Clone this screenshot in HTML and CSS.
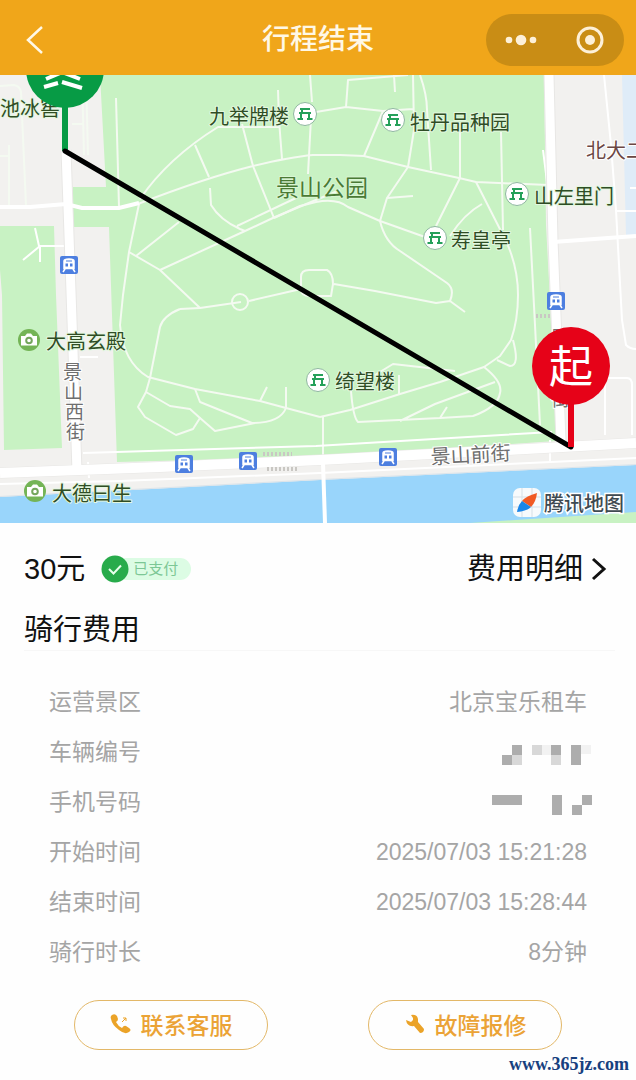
FILE: index.html
```html
<!DOCTYPE html>
<html lang="zh-CN">

<head>
    <meta charset="UTF-8">
    <meta name="viewport" content="width=device-width, initial-scale=1.0">
    <title>行程结束</title>
    <link rel="stylesheet" href="styles.css">
</head>

<body>
    <header class="nav">
        <button class="back" aria-label="返回">
            <svg width="20" height="30" viewBox="0 0 20 30"><path d="M17 2 3 15 17 28" /></svg>
        </button>
        <h1>行程结束</h1>
        <div class="capsule">
            <button aria-label="更多">
                <svg width="32" height="12" viewBox="0 0 32 12">
                    <circle cx="4" cy="6" r="3.3" />
                    <circle cx="16" cy="6" r="5.3" />
                    <circle cx="28" cy="6" r="3.3" />
                </svg>
            </button>
            <button aria-label="关闭">
                <svg width="30" height="30" viewBox="0 0 30 30">
                    <circle class="ring" cx="15" cy="15" r="12" />
                    <circle cx="15" cy="15" r="5" />
                </svg>
            </button>
        </div>
    </header>

    <svg class="map" viewBox="0 75 636 448" role="img" aria-label="骑行轨迹">
        <defs>
            <g id="gate">
                <circle class="gate-bg" r="11.5" />
                <path class="gate-line" d="M-5-5H5M-6-1H6M-4-1V5M4-1V5M-7.500 5H-2M2 5H7.500M-3-5V-1" />
            </g>
            <g id="bus">
                <rect class="bus-bg" x="-9" y="-9" width="18" height="18" rx="2" />
                <path class="bus-body" d="M-5-4Q-5-6 0-6 5-6 5-4V3.500H-5ZM-4 4-6 7M4 4 6 7" />
                <path class="bus-win" d="M-3.500-1.500h2.500v3h-2.500zM1-1.500h2.500v3h-2.500zM-3-4.500h6v1h-6z" />
            </g>
            <g id="camera">
                <circle class="camera-bg" r="11" />
                <path class="camera-body" d="M-8-4H-4L-2-6.500H2L4-4H8V5.500H-8Z" />
                <circle class="camera-lens" r="2.800" cy="0.500" />
            </g>
        </defs>

        <!-- 地块 -->
        <rect class="land" y="75" width="636" height="448" />
        <path class="park" d="M100 75H544L546 225 550 300 556 441 316 457 117 462 109 227H73V187H106Z" />
        <path class="park" d="M0 226H54L56 295 62 448 4 450 2 295 0 270Z" />
        <path class="block" d="M622 75H636V235H626Z" />
        <path class="water" d="M0 497 320 480 636 465V523H0Z" />
        <path class="park" d="M470 523 636 512V523Z" />
        <path class="edge" d="M0 496.500 320 479.500 636 464.500" />

        <!-- 小路 -->
        <g class="path">
            <path d="M0 86 14 85Q20 86 21 92L26 206M9 145V207M0 156H9" />
            <path d="M72 124H83M82 75 84 155M86 75 88 155" />
            <path d="M116 98 119 207M278 90 279 120M279 120 282 159M310 75 312 102M311 118 308 174" />
            <path d="M140 199Q168 158 218 127L280 127M195 145 209 177M242 124 253 166 274 218M138 204Q205 178 253 166 290 157 313 155H340L364 156 408 167 459 178 476 182 548 185" />
            <path d="M139 204 129 252 123 295 120 325Q123 362 148 377L195 389 260 401 286 408 320 417" />
            <path d="M129 252 160 270 200 308 241 302M136 256 179 222M160 270 245 231 275 217 340 190" />
            <path d="M210 188 211 205Q220 220 240 229L245 231M237 226 296 198M274 218 300 206 316 202Q337 198 348 207L380 221 425 237" />
            <path d="M249 301 301 289M301 289V277Q301 270 309 270H327Q333 273 333 284L331 296H310Q301 296 301 289M334 284 375 291 436 303 450 301 465 312" />
            <circle cx="240" cy="302" r="8" />
            <path d="M180 309Q163 316 160 327L150 378 146 392 138 407 145 417 176 435 193 429 200 418 190 409 170 406 146 392M180 309 200 308" />
            <path d="M195 389 200 402 252 423Q280 423 286 408V387M260 401 267 387M200 418 215 431 255 423" />
            <path d="M316 112 346 107 383 111 413 109M346 107 348 80 408 75M394 75 395 92M413 75 414 130 408 167 387 198 380 221Q385 242 400 251L447 283Q455 289 450 301" />
            <path d="M420 75Q427 95 427 110L431 170M383 111 364 156M460 132V178L436 226M501 132 503 230M476 182 506 241Q518 267 518 295 518 320 511 340L500 356 484 367 440 382 400 394 350 410 320 417" />
            <path d="M387 198 413 196M450 236Q464 214 482 204M513 340Q520 366 510 366L497 360M484 367Q503 382 500 393 498 407 473 416L440 418 358 422Q353 417 351 391M400 421 435 404 495 382M440 418 447 407M375 375 393 364 455 371M399 375V394M530 228 535 325 540 425M323 417V460" />
        </g>
        <g class="lane">
            <path d="M83 453 316 446 552 432M40 245V262M40 246H66M40 246 23 260M35 228 39 246M88 462 89 478" />
            <path d="M80 357H98M543 150 548 190M606 378H627Q632 378 632 385V435M605 380V435M550 440V462" />
            <path d="M604 75 611 145 616 210 622 320 626 345Q630 349 636 349M617 211H636M630 188H636" />
        </g>

        <!-- 主路 -->
        <path class="street-edge" d="M66 150 72 320 77 472M549 75 553 240 561 441M0 473 160 467 320 460 636 443" />
        <path class="road" d="M0 207 30 207 66 204 82 208 119 208 139 203M553 242 636 236" />
        <path class="lane" d="M0 484 120 481 320 473 636 458" />
        <path class="street" d="M66 150 72 320 77 472M549 75 553 240 561 441" />
        <path class="avenue" d="M0 473 160 467 320 460 636 443" />
        <path class="road" d="M323 463 325 523" />
        <path class="bridge" d="M263 454H292M536 316H552" />
        <path class="bridge" d="M267 469H298" />

        <use href="#bus" x="69" y="265" />
        <use href="#bus" x="184" y="464" />
        <use href="#bus" x="248" y="461" />
        <use href="#bus" x="388" y="457" />
        <use href="#bus" x="556" y="301" />

        <use href="#gate" x="305" y="114" />
        <use href="#gate" x="393" y="120" />
        <use href="#gate" x="517" y="194" />
        <use href="#gate" x="435" y="238" />
        <use href="#gate" x="318" y="380" />
        <use href="#camera" x="29" y="340" />
        <use href="#camera" x="35" y="491" />

        <g class="poi">
            <text x="0" y="116">池冰窖</text>
            <text x="209" y="124">九举牌楼</text>
            <text x="410" y="130">牡丹品种园</text>
            <text x="534" y="204">山左里门</text>
            <text x="451" y="248">寿皇亭</text>
            <text x="46" y="349">大高玄殿</text>
            <text x="335" y="389">绮望楼</text>
            <text x="52" y="501">大德曰生</text>
            <text class="park-name" x="276" y="196">景山公园</text>
            <text class="school" x="586" y="158">北大二</text>
        </g>
        <g class="street-name">
            <text x="63" y="379">景</text>
            <text x="64" y="399">山</text>
            <text x="65" y="419">西</text>
            <text x="66" y="439">街</text>
            <text x="550" y="345">景</text>
            <text x="551" y="406">街</text>
            <text class="front" x="431" y="464" transform="rotate(-3 431 464)">景山前街</text>
        </g>

        <!-- 起点、终点和轨迹 -->
        <circle class="end" cx="65" cy="69" r="39" />
        <path class="end-mark" d="M46 79 60 73M62 72 80 79M44 87 58 83M62 82 82 88" />
        <path class="end-stem" d="M65 105V151" />
        <path class="track" d="M65 151 571 447" />
        <path class="start-stem" d="M571 400V447" />
        <circle class="start" cx="571" cy="366" r="39" />
        <text class="start-text" x="571" y="383">起</text>

        <!-- 地图标识 -->
        <rect class="logo-bg" x="513" y="488" width="28" height="29" rx="7" />
        <path class="logo-grid" d="M522 488V517M532 488V517M513 497H541M513 507H541" />
        <path class="logo-red" d="M537 493Q526 496 522 501L531 507Q536 502 537 493Z" />
        <path class="logo-blue" d="M517 512Q518 505 522 501L531 507Q527 511 517 512Z" />
        <text class="logo-text" x="544" y="511">腾讯地图</text>
    </svg>

    <main class="order">
        <div class="pay">
            <span class="price">30元</span>
            <span class="paid">
                <svg width="28" height="28" viewBox="0 0 28 28">
                    <circle cx="14" cy="14" r="13.500" />
                    <path d="M8 14 12.500 18.500 20 10.500" />
                </svg>
                <span>已支付</span>
            </span>
            <a class="detail" href="#">费用明细
                <svg width="16" height="24" viewBox="0 0 16 24"><path d="M2 2 13 12 2 22" /></svg>
            </a>
        </div>

        <h2>骑行费用</h2>

        <dl class="info">
            <div><dt>运营景区</dt><dd>北京宝乐租车</dd></div>
            <div>
                <dt>车辆编号</dt>
                <dd>
                    <svg class="mosaic" width="90" height="20" viewBox="0 0 90 20">
                        <path d="M10 0h10v10H10zM0 10h10v10H0zM49 0h10v10H49zM69 0h10v20H69z" />
                        <path class="light" d="M10 10h10v10H10zM30 0h10v10H30zM49 10h10v10H49z" />
                        <path class="faint" d="M40 0h9v10h-9zM79 0h10v9H79z" />
                    </svg>
                </dd>
            </div>
            <div>
                <dt>手机号码</dt>
                <dd>
                    <svg class="mosaic" width="100" height="20" viewBox="0 0 100 20">
                        <path d="M0 0h30v10H0zM60 0h10v20H60zM90 0h10v10H90zM80 10h10v10H80z" />
                    </svg>
                </dd>
            </div>
            <div><dt>开始时间</dt><dd>2025/07/03 15:21:28</dd></div>
            <div><dt>结束时间</dt><dd>2025/07/03 15:28:44</dd></div>
            <div><dt>骑行时长</dt><dd>8分钟</dd></div>
        </dl>

        <div class="btns">
            <button>
                <svg width="22" height="22" viewBox="0 0 22 22">
                    <path d="M2 2Q5 0 7 3L8 6Q8 8 6 9 8 13 12 15 14 12 16 13L19 15Q22 17 19 19 15 22 9 17 2 12 1 6 0 3 2 2Z" />
                    <path class="arrow" d="M12 9 16 5M13 5H16V8" />
                </svg>
                联系客服
            </button>
            <button>
                <svg width="22" height="22" viewBox="0 0 22 22">
                    <path d="M7 2Q13 1 14 6L14 9 20 16Q20 20 16 20L10 13Q3 14 2 7L7 9 9 7 9 5Z" />
                </svg>
                故障报修
            </button>
        </div>
    </main>

    <footer class="site">www.365jz.com</footer>
</body>

</html>
```

FILE: styles.css
```css
* {
    padding: 0;
    margin: 0;
    box-sizing: border-box;
}

body {
    background-color: #fefefe;
    font-family: "Liberation Sans", "Noto Sans CJK SC", sans-serif;
    color: #111;
}

button {
    border: none;
    background: none;
    font-family: inherit;
    cursor: pointer;
}

svg {
    display: block;
}

/* 顶部导航 */
.nav {
    display: grid;
    grid-template-columns: 1fr auto 1fr;
    align-items: center;
    height: 75px;
    padding: 4px 12px 0;
    background-color: #f0a61a;
}

.nav h1 {
    font-size: 28px;
    line-height: 42px;
    font-weight: 500;
    color: #fff8e6;
}

.back {
    justify-self: start;
    padding-left: 13px;
}

.back path {
    fill: none;
    stroke: #fff8e6;
    stroke-width: 2.5;
}

.capsule {
    justify-self: end;
    display: flex;
    align-items: center;
    justify-content: space-between;
    width: 138px;
    height: 52px;
    padding: 0 19px;
    border-radius: 26px;
    background-color: #c98d15;
}

.capsule circle {
    fill: #fdf0d8;
}

.capsule .ring {
    fill: none;
    stroke: #fdf0d8;
    stroke-width: 3;
}

/* 地图 */
.map {
    width: 100%;
    height: auto;
    font-family: "Noto Sans CJK SC", sans-serif;
}

.map path,
.path circle {
    fill: none;
}

.map .land {
    fill: #f2f1ef;
}

.map .park {
    fill: #c8f2c3;
}

.map .block {
    fill: #dfecf8;
}

.map .water {
    fill: #99d5fb;
}

.edge {
    stroke: #dce4ea;
}

.path {
    stroke: #f4faf1;
    stroke-width: 2;
    stroke-linejoin: round;
}

.lane {
    stroke: #fff;
    stroke-width: 2;
}

.road {
    stroke: #fff;
    stroke-width: 4;
}

.street-edge {
    stroke: #e8e7e5;
    stroke-width: 11;
}

.street {
    stroke: #fff;
    stroke-width: 9;
}

.avenue {
    stroke: #fff;
    stroke-width: 10;
}

.bridge {
    stroke: #c9c7c3;
    stroke-width: 4;
    stroke-dasharray: 2 2;
}

.gate-bg {
    fill: #fff;
    stroke: #8fb7a0;
}

.map .gate-line {
    stroke: #25a05a;
    stroke-width: 2;
}

.bus-bg {
    fill: #4d7fe0;
}

.map .bus-body {
    fill: #fff;
    stroke: #fff;
    stroke-width: 1.5;
}

.map .bus-win {
    fill: #4d7fe0;
}

.camera-bg {
    fill: #74b456;
}

.map .camera-body {
    fill: #fff;
}

.camera-lens {
    fill: #fff;
    stroke: #74a65c;
    stroke-width: 2;
}

.poi {
    font-size: 20px;
    fill: #2f4d25;
    stroke: #e4f8e0;
    stroke-width: 2;
    stroke-linejoin: round;
    paint-order: stroke;
}

.poi .park-name {
    font-size: 23px;
    fill: #4a7a35;
    stroke: #d9f5d3;
}

.poi .school {
    fill: #6b4744;
    stroke: #fff;
}

.street-name {
    font-size: 19px;
    fill: #6f6f6f;
    stroke: #fff;
    stroke-width: 2;
    paint-order: stroke;
}

.street-name .front {
    font-size: 20px;
}

.end {
    fill: #079b45;
}

.map .end-mark {
    stroke: #fff;
    stroke-width: 4;
}

.end-stem {
    stroke: #079b45;
    stroke-width: 6;
}

.track {
    stroke: #000;
    stroke-width: 5;
    stroke-linecap: round;
}

.start {
    fill: #e60218;
}

.start-stem {
    stroke: #e60218;
    stroke-width: 6;
}

.start-text {
    font-size: 44px;
    fill: #fff;
    text-anchor: middle;
}

.logo-bg {
    fill: #f7fafc;
}

.logo-grid {
    stroke: #d5dfe6;
}

.map .logo-red {
    fill: #f15a24;
}

.map .logo-blue {
    fill: #1b86e8;
}

.logo-text {
    font-size: 20px;
    font-weight: 500;
    fill: #3f4a52;
    stroke: #fff;
    stroke-width: 3;
    paint-order: stroke;
}

/* 订单信息 */
.order {
    padding: 24px 21px 0 24px;
}

.pay {
    display: flex;
    align-items: center;
    height: 44px;
    font-size: 29px;
    line-height: 44px;
}

.paid {
    display: flex;
    align-items: center;
    margin-left: 16px;
    font-size: 15px;
    color: #7cc795;
}

.paid svg {
    position: relative;
}

.paid span {
    height: 22px;
    margin-left: -14px;
    padding: 0 13px 0 18px;
    border-radius: 11px;
    background-color: #dcfce4;
    line-height: 22px;
}

.paid circle {
    fill: #28ab4b;
}

.paid path {
    fill: none;
    stroke: #e8ffec;
    stroke-width: 2;
}

.detail {
    display: flex;
    align-items: center;
    gap: 8px;
    margin-left: auto;
    padding-right: 8px;
    color: #111;
    text-decoration: none;
}

.detail path {
    fill: none;
    stroke: #111;
    stroke-width: 3;
}

.order h2 {
    height: 60px;
    border-bottom: 1px solid #f7f7f7;
    font-size: 29px;
    font-weight: 400;
    line-height: 78px;
}

.info {
    padding: 26px 28px 0 25px;
    font-size: 23px;
    line-height: 50px;
    color: #a5a5a5;
}

.info div {
    display: flex;
    justify-content: space-between;
    height: 50px;
}

.info dd {
    display: flex;
    align-items: center;
}

.mosaic {
    margin: 5px -5px 0 0;
    fill: #adadad;
}

.mosaic .light {
    fill: #d8d8d8;
}

.mosaic .faint {
    fill: #f2f2f2;
}

.btns {
    display: flex;
    justify-content: space-between;
    padding: 23px 53px 0 50px;
}

.btns button {
    display: flex;
    align-items: center;
    justify-content: center;
    gap: 9px;
    width: 194px;
    height: 50px;
    padding-bottom: 2px;
    border: 1px solid #e3b868;
    border-radius: 25px;
    font-size: 23px;
    font-weight: 500;
    color: #eba336;
}

.btns svg {
    fill: #eba328;
}

.btns .arrow {
    fill: none;
    stroke: #eba328;
}

.site {
    padding-right: 7px;
    font-family: "Liberation Serif", serif;
    font-size: 18px;
    font-weight: bold;
    line-height: 29px;
    text-align: right;
    color: #17407f;
}
```
